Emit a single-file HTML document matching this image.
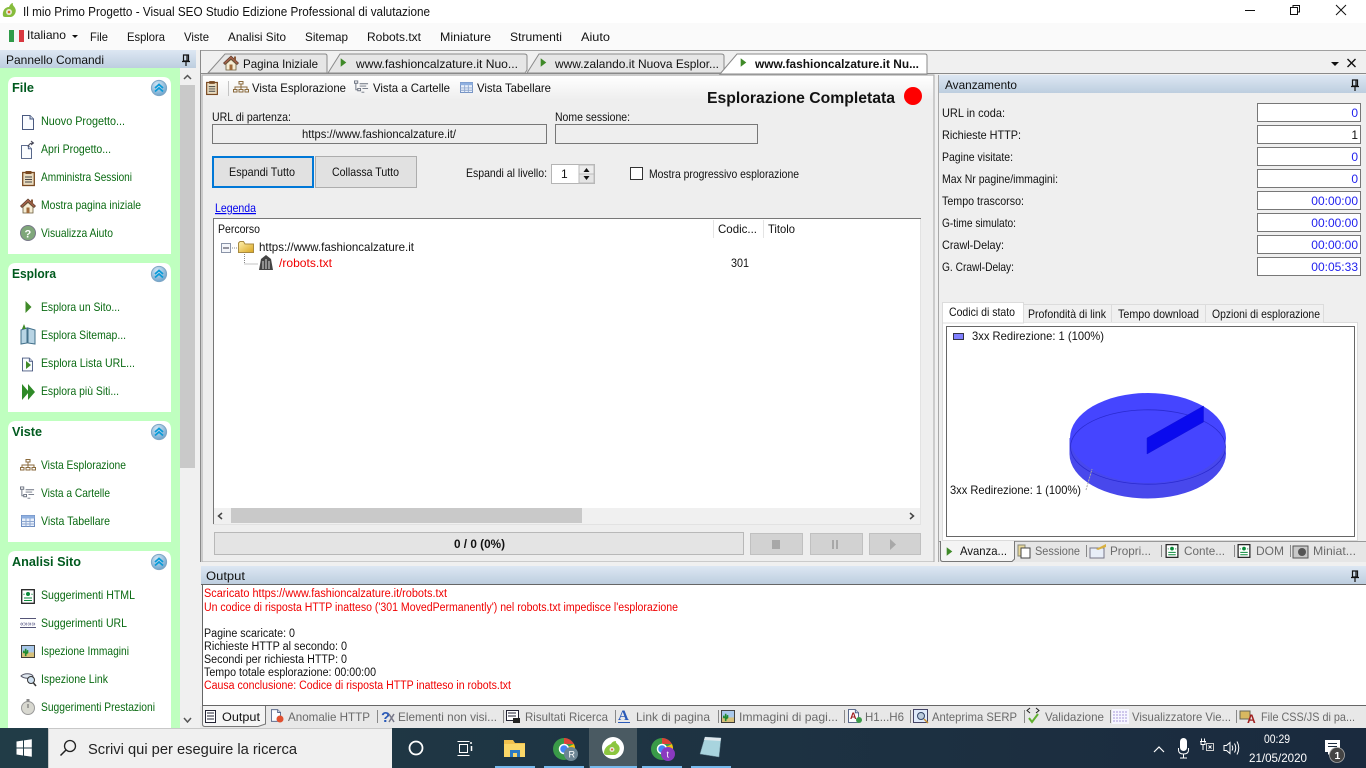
<!DOCTYPE html>
<html lang="it"><head><meta charset="utf-8"><title>Visual SEO Studio</title>
<style>
html,body{margin:0;padding:0;width:1366px;height:768px;overflow:hidden;background:#f0f0f0}
svg{display:block}
text{font-family:"Liberation Sans",sans-serif;font-size:12px;fill:#111;white-space:pre}
.g text{fill:#0a6a12}
.h text{fill:#005a1e;font-weight:bold;font-size:13px}
.m text{fill:#6a6a6a}
.v text{fill:#2222ee;text-anchor:end}
.o text{font-size:11.5px}
.r{fill:#f00000!important}
.i{stroke:#556;fill:none;stroke-width:1}
</style></head><body>
<svg width="1366" height="768" viewBox="0 0 1366 768" xmlns="http://www.w3.org/2000/svg">
<defs>
<linearGradient id="hd" x1="0" y1="0" x2="0" y2="1"><stop offset="0" stop-color="#dde7f3"/><stop offset="1" stop-color="#bdcedf"/></linearGradient>
<linearGradient id="tb" x1="0" y1="0" x2="0" y2="1"><stop offset="0" stop-color="#ffffff"/><stop offset="1" stop-color="#eeeeee"/></linearGradient>
<linearGradient id="tk" x1="0" y1="0" x2="1" y2="0"><stop offset="0" stop-color="#213c47"/><stop offset="1" stop-color="#1a2a3e"/></linearGradient>
<linearGradient id="fo" x1="0" y1="0" x2="1" y2="1"><stop offset="0" stop-color="#fff2b0"/><stop offset="1" stop-color="#d9a520"/></linearGradient>
<radialGradient id="bl" cx=".4" cy=".3" r=".8"><stop offset="0" stop-color="#d8e8f5"/><stop offset="1" stop-color="#5f9cc8"/></radialGradient>
<symbol id="chev" viewBox="0 0 16 16" overflow="visible"><circle cx="8" cy="8" r="7.6" fill="url(#bl)" stroke="#7fa7c6"/><path d="M4 8 8 4.500 12 8M4 11.500 8 8 12 11.500" fill="none" stroke="#0a9ad8" stroke-width="1.800"/></symbol>
<symbol id="pin" viewBox="0 0 10 12" overflow="visible"><path d="M2.500 1H7.500V7H2.500ZM6 1V7M1 7.500H9M5 8V12" fill="none" stroke="#111" stroke-width="1.200"/></symbol>
<symbol id="play" viewBox="0 0 10 12" overflow="visible"><path d="M1 0 9 6 1 12Z" fill="#3f8a28"/></symbol>
<symbol id="tree" viewBox="0 0 16 12" overflow="visible"><path d="M6 .500H10V3H6ZM.500 8.500H4V11H.500ZM6 8.500H10V11H6ZM12 8.500H15.500V11H12ZM8 3V6M2 8.500V6H14V8.500M8 6V8.500" fill="none" stroke="#8a6a3c"/></symbol>
<symbol id="fold" viewBox="0 0 16 14" overflow="visible"><path d="M.500 .500H4V3H.500ZM6 3.500H15M6 6H13M4 8.500H7V11H4ZM9 8.500H15M8 12.500H11M2 3V10H4" fill="none" stroke="#6b7280"/></symbol>
<symbol id="tab" viewBox="0 0 14 12" overflow="visible"><rect x=".5" y=".5" width="13" height="11" fill="#eaf1fb" stroke="#6c8cc0"/><rect x=".5" y=".5" width="13" height="3" fill="#8fb0e0"/><path d="M.500 6.500H13.500M.500 9H13.500M5 3.500V11.500M9 3.500V11.500" stroke="#8fa8d0" fill="none"/></symbol>
<symbol id="clip" viewBox="0 0 13 15" overflow="visible"><rect x=".7" y="1.500" width="11.600" height="13" fill="#e9dcc0" stroke="#7a4a22" stroke-width="1.300"/><rect x="3.500" y="0" width="6" height="3" fill="#7a4a22"/><path d="M3 6H10M3 8.500H10M3 11H10" stroke="#444"/></symbol>
<symbol id="doc" viewBox="0 0 12 15" overflow="visible"><path d="M.500 .500H8L11.500 4V14.500H.500Z" fill="#fafcff" stroke="#4a5a80"/><path d="M8 .500V4H11.500" fill="#cfd8e8" stroke="#4a5a80"/></symbol>
<symbol id="house" viewBox="0 0 16 16" overflow="visible"><path d="M8 1 .500 8 2 9.500 8 4 14 9.500 15.500 8Z" fill="#a6624a" stroke="#5a3a2a" stroke-width=".7"/><path d="M3 9V15H13V9L8 4.500Z" fill="#f5ecd4" stroke="#6a5a3a" stroke-width=".8"/><rect x="6.500" y="9.500" width="3" height="5.500" fill="#a06a3a"/><rect x="11" y="1.500" width="2" height="4" fill="#8a5a3a"/></symbol>
<symbol id="code" viewBox="0 0 14 15" overflow="visible"><rect x=".7" y=".7" width="12.600" height="13.600" fill="#fff" stroke="#222" stroke-width="1.300"/><circle cx="7" cy="5" r="2" fill="#0a8a3a"/><path d="M3.500 5 2.500 5.500M10.500 5 11.500 5.500M3 9H11M3 11.500H11" stroke="#0a8a3a" fill="none"/></symbol>
<symbol id="foldr" viewBox="0 0 16 12" overflow="visible"><path d="M.500 2V11.500H15.500V3H7L5.500 .500H2Z" fill="url(#fo)" stroke="#a88a40"/></symbol>
<symbol id="img" viewBox="0 0 15 14" overflow="visible"><rect x=".5" y=".5" width="14" height="13" fill="#d6c07a" stroke="#333"/><rect x="1" y="1" width="13" height="7" fill="#a9c8ea"/><path d="M5 12V4M3 6V8H7V5.500M5 9H7" stroke="#208a30" stroke-width="1.700" fill="none"/></symbol>
</defs>

<!-- title bar -->
<rect width="1366" height="23" fill="#fff"/>
<g><path d="M3 16C2 11 5 7 9 7 10 5 11 3 13 3 12 5 14 6 15 8 17 11 15 16 11 17H6C5 17 3.500 17 3 16Z" fill="#86bc3c"/><circle cx="9" cy="12" r="3" fill="#e8e8d8"/><circle cx="9" cy="12" r="1.300" fill="#d86a28"/></g>
<text x="23" y="16" textLength="407" lengthAdjust="spacingAndGlyphs" style="font-size:12.5px">Il mio Primo Progetto - Visual SEO Studio Edizione Professional di valutazione</text>
<path d="M1245 10.500H1255" stroke="#111"/>
<path d="M1290.500 7.500H1297.500V14.500H1290.500ZM1293 7V5.500H1299.500V12H1298" fill="none" stroke="#111"/>
<path d="M1336 5 1346 15M1346 5 1336 15" stroke="#111"/>

<!-- menu -->
<rect y="23" width="1366" height="27" fill="#fafafa"/>
<rect x="9" y="30" width="5" height="12" fill="#2f9a48"/><rect x="14" y="30" width="5" height="12" fill="#f4f4f4"/><rect x="19" y="30" width="5" height="12" fill="#d83840"/>
<text x="27" y="39" textLength="39" lengthAdjust="spacingAndGlyphs">Italiano</text>
<path d="M72 35H78L75 38Z" fill="#111"/>
<g>
<text x="90" y="41" textLength="18" lengthAdjust="spacingAndGlyphs">File</text>
<text x="127" y="41" textLength="38" lengthAdjust="spacingAndGlyphs">Esplora</text>
<text x="184" y="41" textLength="25" lengthAdjust="spacingAndGlyphs">Viste</text>
<text x="228" y="41" textLength="58" lengthAdjust="spacingAndGlyphs">Analisi Sito</text>
<text x="305" y="41" textLength="43" lengthAdjust="spacingAndGlyphs">Sitemap</text>
<text x="367" y="41" textLength="54" lengthAdjust="spacingAndGlyphs">Robots.txt</text>
<text x="440" y="41" textLength="51" lengthAdjust="spacingAndGlyphs">Miniature</text>
<text x="510" y="41" textLength="52" lengthAdjust="spacingAndGlyphs">Strumenti</text>
<text x="581" y="41" textLength="29" lengthAdjust="spacingAndGlyphs">Aiuto</text>
</g>

<!-- left panel -->
<rect y="50" width="196" height="18" fill="url(#hd)"/>
<text x="6" y="64" textLength="98" lengthAdjust="spacingAndGlyphs">Pannello Comandi</text>
<use href="#pin" x="181" y="54" width="10" height="12"/>
<rect y="68" width="180" height="660" fill="#bfffbf"/>
<rect x="180" y="68" width="16" height="660" fill="#f0f0f0"/>
<rect x="180" y="85" width="15" height="383" fill="#c9c9c9"/>
<path d="M184 79 187.500 75.500 191 79M184 718 187.500 722 191 718" fill="none" stroke="#555" stroke-width="1.500"/>
<path d="M8 254V85Q8 77 16 77H163Q171 77 171 85V254ZM8 412V271Q8 263 16 263H163Q171 263 171 271V412ZM8 542V429Q8 421 16 421H163Q171 421 171 429V542ZM8 728V559Q8 551 16 551H163Q171 551 171 559V728Z" fill="#fff"/>
<g class="h">
<text x="12" y="92" textLength="22" lengthAdjust="spacingAndGlyphs">File</text>
<text x="12" y="278" textLength="44" lengthAdjust="spacingAndGlyphs">Esplora</text>
<text x="12" y="436" textLength="30" lengthAdjust="spacingAndGlyphs">Viste</text>
<text x="12" y="566" textLength="69" lengthAdjust="spacingAndGlyphs">Analisi Sito</text>
</g>
<use href="#chev" x="151" y="80" width="16" height="16"/><use href="#chev" x="151" y="266" width="16" height="16"/><use href="#chev" x="151" y="424" width="16" height="16"/><use href="#chev" x="151" y="554" width="16" height="16"/>
<g class="g">
<text x="41" y="125" textLength="84" lengthAdjust="spacingAndGlyphs">Nuovo Progetto...</text>
<text x="41" y="153" textLength="70" lengthAdjust="spacingAndGlyphs">Apri Progetto...</text>
<text x="41" y="181" textLength="91" lengthAdjust="spacingAndGlyphs">Amministra Sessioni</text>
<text x="41" y="209" textLength="100" lengthAdjust="spacingAndGlyphs">Mostra pagina iniziale</text>
<text x="41" y="237" textLength="72" lengthAdjust="spacingAndGlyphs">Visualizza Aiuto</text>
<text x="41" y="311" textLength="79" lengthAdjust="spacingAndGlyphs">Esplora un Sito...</text>
<text x="41" y="339" textLength="85" lengthAdjust="spacingAndGlyphs">Esplora Sitemap...</text>
<text x="41" y="367" textLength="94" lengthAdjust="spacingAndGlyphs">Esplora Lista URL...</text>
<text x="41" y="395" textLength="78" lengthAdjust="spacingAndGlyphs">Esplora più Siti...</text>
<text x="41" y="469" textLength="85" lengthAdjust="spacingAndGlyphs">Vista Esplorazione</text>
<text x="41" y="497" textLength="69" lengthAdjust="spacingAndGlyphs">Vista a Cartelle</text>
<text x="41" y="525" textLength="69" lengthAdjust="spacingAndGlyphs">Vista Tabellare</text>
<text x="41" y="599" textLength="94" lengthAdjust="spacingAndGlyphs">Suggerimenti HTML</text>
<text x="41" y="627" textLength="86" lengthAdjust="spacingAndGlyphs">Suggerimenti URL</text>
<text x="41" y="655" textLength="88" lengthAdjust="spacingAndGlyphs">Ispezione Immagini</text>
<text x="41" y="683" textLength="67" lengthAdjust="spacingAndGlyphs">Ispezione Link</text>
<text x="41" y="711" textLength="114" lengthAdjust="spacingAndGlyphs">Suggerimenti Prestazioni</text>
</g>
<!-- sidebar icons -->
<use href="#doc" x="22" y="115" width="12" height="15"/>
<use href="#doc" x="21" y="145" width="11" height="14"/><path d="M28 147Q29 143 33 143M31 141 33.500 143 31 145" fill="none" stroke="#445" />
<use href="#clip" x="22" y="171" width="13" height="15"/>
<use href="#house" x="20" y="198" width="16" height="16"/>
<circle cx="28" cy="233" r="7.500" fill="#7fa77a" stroke="#778"/><text x="24.500" y="237.500" style="font-size:11px;font-weight:bold;fill:#fff">?</text>
<path d="M25.500 301 31.500 307 25.500 313Z" fill="#3f8a28"/>
<path d="M21 330 27 328V343L21 344Z M28 328 35 330V344L28 343Z" fill="#b8d4e4" stroke="#42708a"/><path d="M24 324 26 329H22Z" fill="#3f8a28"/>
<use href="#doc" x="22" y="357" width="11" height="15"/><path d="M26 361 31 365 26 369Z" fill="#3f8a28"/>
<path d="M22 384 29 392 22 400ZM28 384 35 392 28 400Z" fill="#2f8a28"/>
<use href="#tree" x="20" y="459" width="16" height="12"/>
<use href="#fold" x="20" y="486" width="15" height="14"/>
<use href="#tab" x="21" y="515" width="14" height="12"/>
<use href="#code" x="21" y="589" width="14" height="15"/>
<path d="M20 618.500H36M20 627.500H36" stroke="#557"/><text x="20" y="626" style="font-size:7px;fill:#447">«»»»</text>
<use href="#img" x="21" y="645" width="14" height="13"/>
<path d="M21 676C24 673 31 673 33 676 33 679 24 679 21 676Z" fill="#e0e8f0" stroke="#556"/><circle cx="31" cy="680" r="3.500" fill="#cfe0f0" stroke="#333"/><path d="M33.500 683 36 686" stroke="#333" stroke-width="1.500"/>
<circle cx="28" cy="708" r="6.500" fill="#d8d8d0" stroke="#999"/><rect x="26.500" y="699" width="3" height="2.500" fill="#888"/><path d="M28 708V704" stroke="#666"/>

<!-- center tab strip -->
<rect x="200" y="50" width="1166" height="25" fill="#f0f0f0"/>
<path d="M200 50.500H1366" stroke="#a0a0a0"/>
<path d="M200.500 50V562M200 73.500H1366" stroke="#8a8a8a"/>
<path d="M208 73 225 54H325Q327 54 327 56V73Z" fill="#e6e6e6" stroke="#8a8a8a"/>
<path d="M328 73 340 54H524Q527 54 527 56V70L525 73Z" fill="#e6e6e6" stroke="#8a8a8a"/>
<path d="M527 73 539 54H721Q724 54 724 56V70L723 73Z" fill="#e6e6e6" stroke="#8a8a8a"/>
<path d="M720 74 737 54H925Q927 54 927 56V74Z" fill="#fff" stroke="#8a8a8a"/>
<use href="#house" x="223" y="55" width="16" height="16"/>
<text x="243" y="68" textLength="75" lengthAdjust="spacingAndGlyphs">Pagina Iniziale</text>
<use href="#play" x="340" y="57" width="7" height="11"/>
<text x="356" y="68" textLength="162" lengthAdjust="spacingAndGlyphs">www.fashioncalzature.it Nuo...</text>
<use href="#play" x="540" y="57" width="7" height="11"/>
<text x="555" y="68" textLength="164" lengthAdjust="spacingAndGlyphs">www.zalando.it Nuova Esplor...</text>
<use href="#play" x="740" y="57" width="7" height="11"/>
<text x="755" y="68" textLength="164" lengthAdjust="spacingAndGlyphs" style="font-weight:bold">www.fashioncalzature.it Nu...</text>
<path d="M1331 62H1339L1335 66Z" fill="#111"/>
<path d="M1347.500 59 1355.500 67M1355.500 59 1347.500 67" stroke="#111" stroke-width="1.400"/>

<!-- main panel -->
<rect x="202" y="75" width="732" height="487" fill="#eeeeee" stroke="#a8a8a8"/>
<rect x="203" y="76" width="730" height="24" fill="url(#tb)"/>
<use href="#clip" x="206" y="81" width="12" height="14"/>
<path d="M228.500 81V96" stroke="#c4c4c4"/>
<use href="#tree" x="233" y="81" width="16" height="12"/>
<text x="252" y="92" textLength="94" lengthAdjust="spacingAndGlyphs">Vista Esplorazione</text>
<use href="#fold" x="354" y="80" width="15" height="14"/>
<text x="373" y="92" textLength="77" lengthAdjust="spacingAndGlyphs">Vista a Cartelle</text>
<use href="#tab" x="460" y="82" width="13" height="11"/>
<text x="477" y="92" textLength="74" lengthAdjust="spacingAndGlyphs">Vista Tabellare</text>
<text x="707" y="103" textLength="188" lengthAdjust="spacingAndGlyphs" style="font-size:16px;font-weight:bold">Esplorazione Completata</text>
<circle cx="913" cy="96" r="9" fill="#f00"/>
<text x="212" y="121" textLength="79" lengthAdjust="spacingAndGlyphs">URL di partenza:</text>
<rect x="212.500" y="124.500" width="334" height="19" fill="#eeeeee" stroke="#777"/>
<text x="302" y="138" textLength="154" lengthAdjust="spacingAndGlyphs">https://www.fashioncalzature.it/</text>
<text x="555" y="121" textLength="75" lengthAdjust="spacingAndGlyphs">Nome sessione:</text>
<rect x="555.500" y="124.500" width="202" height="19" fill="#eeeeee" stroke="#777"/>
<rect x="213" y="157" width="100" height="30" fill="#e1e1e1" stroke="#0078d7" stroke-width="2"/>
<text x="229" y="176" textLength="66" lengthAdjust="spacingAndGlyphs">Espandi Tutto</text>
<rect x="315.500" y="156.500" width="101" height="31" fill="#e1e1e1" stroke="#adadad"/>
<text x="332" y="176" textLength="67" lengthAdjust="spacingAndGlyphs">Collassa Tutto</text>
<text x="466" y="177" textLength="81" lengthAdjust="spacingAndGlyphs">Espandi al livello:</text>
<rect x="551.500" y="164.500" width="43" height="19" fill="#fff" stroke="#b4b4b4"/>
<text x="561" y="178">1</text>
<rect x="579" y="165" width="15" height="9" fill="#ececec" stroke="#bbb"/><rect x="579" y="174" width="15" height="9" fill="#e4e4e4" stroke="#bbb"/>
<path d="M583.500 172 586.500 168 589.500 172ZM583.500 176 586.500 180 589.500 176Z" fill="#111"/>
<rect x="630.500" y="167.500" width="12" height="12" fill="#fff" stroke="#333"/>
<text x="649" y="178" textLength="150" lengthAdjust="spacingAndGlyphs">Mostra progressivo esplorazione</text>
<text x="215" y="212" textLength="41" lengthAdjust="spacingAndGlyphs" style="fill:#0000ee;text-decoration:underline">Legenda</text>

<!-- tree -->
<rect x="213" y="218" width="708" height="306" fill="#fff"/>
<path d="M213 218.500H921M213.500 218V524" stroke="#777"/>
<path d="M920.500 219V524M213 524.500H921" stroke="#e2e2e2"/>
<path d="M713.500 220V238M763.500 220V238" stroke="#e4e4e4"/>
<text x="218" y="233" textLength="42" lengthAdjust="spacingAndGlyphs">Percorso</text>
<text x="718" y="233" textLength="39" lengthAdjust="spacingAndGlyphs">Codic...</text>
<text x="768" y="233" textLength="27" lengthAdjust="spacingAndGlyphs">Titolo</text>
<rect x="221.500" y="243.500" width="9" height="9" fill="#f4f6fa" stroke="#8a94a8"/><path d="M223 248H229" stroke="#334"/>
<path d="M232 248H237M244.500 254V264H258" stroke="#888" stroke-dasharray="1 1" fill="none"/>
<use href="#foldr" x="238" y="241" width="16" height="12"/>
<text x="259" y="251" textLength="155" lengthAdjust="spacingAndGlyphs">https://www.fashioncalzature.it</text>
<path d="M259 270H273L271 259 266 255 261 259Z" fill="#444"/><path d="M263 261V269M266 259V269M269 261V269" stroke="#ddd"/>
<text x="279" y="267" textLength="53" lengthAdjust="spacingAndGlyphs" class="r">/robots.txt</text>
<text x="731" y="267" textLength="18" lengthAdjust="spacingAndGlyphs">301</text>
<rect x="214" y="508" width="706" height="16" fill="#f0f0f0"/>
<rect x="231" y="508" width="351" height="15" fill="#c9c9c9"/>
<path d="M222 513 218.500 516 222 519M910 513 913.500 516 910 519" fill="none" stroke="#444" stroke-width="1.500"/>

<!-- progress -->
<rect x="214.500" y="532.500" width="529" height="22" fill="#e4e4e4" stroke="#b8b8b8"/>
<text x="454" y="548" textLength="51" lengthAdjust="spacingAndGlyphs" style="font-weight:bold">0 / 0 (0%)</text>
<rect x="750.500" y="533.500" width="52" height="21" fill="#d2d2d2" stroke="#c0c0c0"/>
<rect x="810.500" y="533.500" width="52" height="21" fill="#d2d2d2" stroke="#c0c0c0"/>
<rect x="869.500" y="533.500" width="51" height="21" fill="#d2d2d2" stroke="#c0c0c0"/>
<rect x="772" y="540" width="8" height="9" fill="#a8a8a8"/>
<path d="M832 540H834V549H832ZM836 540H838V549H836Z" fill="#a8a8a8"/>
<path d="M890 539 896 544.500 890 550Z" fill="#a8a8a8"/>

<!-- right panel -->
<rect x="939" y="75" width="427" height="487" fill="#efefef"/>
<path d="M938.500 75V562" stroke="#a8a8a8"/>
<rect x="939" y="75" width="427" height="18" fill="url(#hd)"/>
<text x="945" y="89" textLength="72" lengthAdjust="spacingAndGlyphs">Avanzamento</text>
<use href="#pin" x="1350" y="79" width="10" height="12"/>
<g>
<text x="942" y="117" textLength="63" lengthAdjust="spacingAndGlyphs">URL in coda:</text>
<text x="942" y="139" textLength="79" lengthAdjust="spacingAndGlyphs">Richieste HTTP:</text>
<text x="942" y="161" textLength="71" lengthAdjust="spacingAndGlyphs">Pagine visitate:</text>
<text x="942" y="183" textLength="116" lengthAdjust="spacingAndGlyphs">Max Nr pagine/immagini:</text>
<text x="942" y="205" textLength="82" lengthAdjust="spacingAndGlyphs">Tempo trascorso:</text>
<text x="942" y="227" textLength="74" lengthAdjust="spacingAndGlyphs">G-time simulato:</text>
<text x="942" y="249" textLength="62" lengthAdjust="spacingAndGlyphs">Crawl-Delay:</text>
<text x="942" y="271" textLength="72" lengthAdjust="spacingAndGlyphs">G. Crawl-Delay:</text>
</g>
<g fill="#fff" stroke="#777">
<rect x="1257.500" y="103.500" width="103" height="18"/><rect x="1257.500" y="125.500" width="103" height="18"/><rect x="1257.500" y="147.500" width="103" height="18"/><rect x="1257.500" y="169.500" width="103" height="18"/><rect x="1257.500" y="191.500" width="103" height="18"/><rect x="1257.500" y="213.500" width="103" height="18"/><rect x="1257.500" y="235.500" width="103" height="18"/><rect x="1257.500" y="257.500" width="103" height="18"/>
</g>
<g class="v">
<text x="1358" y="117">0</text><text x="1358" y="139" style="fill:#111">1</text><text x="1358" y="161">0</text><text x="1358" y="183">0</text>
<text x="1358" y="205">00:00:00</text><text x="1358" y="227">00:00:00</text><text x="1358" y="249">00:00:00</text><text x="1358" y="271">00:05:33</text>
</g>
<!-- chart tabs -->
<rect x="942.500" y="322.500" width="415" height="218" fill="#fff" stroke="#dcdcdc"/>
<path d="M1023.500 322.500V304.500H1323.500V322.500M1111.500 304.500V322M1205.500 304.500V322" fill="#f0f0f0" stroke="#dcdcdc"/>
<path d="M942.500 323V302.500H1023.500V323Z" fill="#fff" stroke="#dcdcdc"/>
<text x="949" y="316" textLength="66" lengthAdjust="spacingAndGlyphs">Codici di stato</text>
<text x="1028" y="318" textLength="78" lengthAdjust="spacingAndGlyphs">Profondità di link</text>
<text x="1118" y="318" textLength="81" lengthAdjust="spacingAndGlyphs">Tempo download</text>
<text x="1212" y="318" textLength="108" lengthAdjust="spacingAndGlyphs">Opzioni di esplorazione</text>
<rect x="946.500" y="326.500" width="408" height="210" fill="#fff" stroke="#666"/>
<rect x="953.500" y="333.500" width="10" height="6" fill="#8080ff" stroke="#334"/>
<text x="972" y="340" textLength="132" lengthAdjust="spacingAndGlyphs">3xx Redirezione: 1 (100%)</text>
<!-- pie -->
<path d="M1069.500 438V454A78 44.500 0 0 0 1225.500 454V438Z" fill="#4848e8"/>
<ellipse cx="1148" cy="453.500" rx="78" ry="44.500" fill="#4848ec"/>
<ellipse cx="1148" cy="438" rx="78" ry="45" fill="#4545ff"/>
<path d="M1070.500 447A77 37 0 0 1 1225.500 447A77 37 0 0 1 1070.500 447Z" fill="none" stroke="#2a2ad0" stroke-width=".8"/>
<path d="M1147 438 1203.500 406V422L1147 454Z" fill="#0a0aee" stroke="#1010d8" stroke-width=".5"/>
<path d="M1086 490 1092 469" stroke="#aaa" stroke-dasharray="2 1"/>
<text x="950" y="494" textLength="131" lengthAdjust="spacingAndGlyphs">3xx Redirezione: 1 (100%)</text>
<!-- right bottom tabs -->
<rect x="939" y="541" width="427" height="21" fill="#e6e6e6"/>
<path d="M939 541.500H1366" stroke="#999"/>
<path d="M940.500 541V559Q940.500 561.500 943 561.500H1012L1014.500 559V541" fill="#f4f4f4" stroke="#777"/>
<use href="#play" x="946" y="546" width="7" height="11"/>
<text x="960" y="555" textLength="47" lengthAdjust="spacingAndGlyphs">Avanza...</text>
<g class="m">
<text x="1035" y="555" textLength="45" lengthAdjust="spacingAndGlyphs">Sessione</text>
<text x="1110" y="555" textLength="41" lengthAdjust="spacingAndGlyphs">Propri...</text>
<text x="1184" y="555" textLength="41" lengthAdjust="spacingAndGlyphs">Conte...</text>
<text x="1256" y="555" textLength="28" lengthAdjust="spacingAndGlyphs">DOM</text>
<text x="1313" y="555" textLength="43" lengthAdjust="spacingAndGlyphs">Miniat...</text>
</g>
<path d="M1086.500 545V557M1161.500 545V557M1234.500 545V557M1290.500 545V557" stroke="#888"/>
<rect x="1018" y="545" width="7" height="11" fill="#e8d89a" stroke="#887"/><rect x="1021" y="548" width="9" height="10" fill="#fff" stroke="#444"/>
<rect x="1090" y="548" width="14" height="10" fill="#e8eef8" stroke="#778"/><path d="M1096 549 1106 544V547L1098 550Z" fill="#d8b040"/>
<use href="#code" x="1165" y="544" width="14" height="14"/>
<use href="#code" x="1237" y="544" width="14" height="14"/>
<rect x="1293" y="546" width="15" height="12" fill="#c8c8c8" stroke="#555"/><circle cx="1302" cy="552" r="4" fill="#555"/>

<!-- output -->
<rect x="200" y="562" width="1166" height="4" fill="#f0f0f0"/>
<rect x="201" y="566" width="1165" height="18" fill="url(#hd)"/>
<text x="206" y="580" textLength="39" lengthAdjust="spacingAndGlyphs">Output</text>
<use href="#pin" x="1350" y="570" width="10" height="12"/>
<rect x="202" y="585" width="1164" height="120" fill="#fff"/>
<path d="M201 584.500H1366M202.500 585V705M202 705.500H1366" stroke="#666"/>
<g class="o">
<text x="204" y="597" textLength="243" lengthAdjust="spacingAndGlyphs" class="r">Scaricato https://www.fashioncalzature.it/robots.txt</text>
<text x="204" y="611" textLength="474" lengthAdjust="spacingAndGlyphs" class="r">Un codice di risposta HTTP inatteso ('301 MovedPermanently') nel robots.txt impedisce l'esplorazione</text>
<text x="204" y="637" textLength="91" lengthAdjust="spacingAndGlyphs">Pagine scaricate: 0</text>
<text x="204" y="650" textLength="143" lengthAdjust="spacingAndGlyphs">Richieste HTTP al secondo: 0</text>
<text x="204" y="663" textLength="143" lengthAdjust="spacingAndGlyphs">Secondi per richiesta HTTP: 0</text>
<text x="204" y="676" textLength="172" lengthAdjust="spacingAndGlyphs">Tempo totale esplorazione: 00:00:00</text>
<text x="204" y="689" textLength="307" lengthAdjust="spacingAndGlyphs" class="r">Causa conclusione: Codice di risposta HTTP inatteso in robots.txt</text>
</g>
<!-- bottom tabs -->
<rect x="200" y="706" width="1166" height="22" fill="#e8e8e8"/>
<path d="M202.500 706V724Q202.500 726.500 205 726.500H258L265.500 724V706" fill="#f4f4f4" stroke="#777"/>
<rect x="205.500" y="710.500" width="10" height="12" fill="#fff" stroke="#223"/><path d="M207 713H214M207 716H214M207 719H214" stroke="#223"/>
<text x="222" y="721" textLength="38" lengthAdjust="spacingAndGlyphs">Output</text>
<g class="m">
<text x="288" y="721" textLength="82" lengthAdjust="spacingAndGlyphs">Anomalie HTTP</text>
<text x="398" y="721" textLength="99" lengthAdjust="spacingAndGlyphs">Elementi non visi...</text>
<text x="525" y="721" textLength="83" lengthAdjust="spacingAndGlyphs">Risultati Ricerca</text>
<text x="636" y="721" textLength="74" lengthAdjust="spacingAndGlyphs">Link di pagina</text>
<text x="739" y="721" textLength="99" lengthAdjust="spacingAndGlyphs">Immagini di pagi...</text>
<text x="865" y="721" textLength="39" lengthAdjust="spacingAndGlyphs">H1...H6</text>
<text x="932" y="721" textLength="85" lengthAdjust="spacingAndGlyphs">Anteprima SERP</text>
<text x="1045" y="721" textLength="59" lengthAdjust="spacingAndGlyphs">Validazione</text>
<text x="1132" y="721" textLength="99" lengthAdjust="spacingAndGlyphs">Visualizzatore Vie...</text>
<text x="1261" y="721" textLength="94" lengthAdjust="spacingAndGlyphs">File CSS/JS di pa...</text>
</g>
<path d="M377.500 710V723M503.500 710V723M615.500 710V723M718.500 710V723M844.500 710V723M910.500 710V723M1024.500 710V723M1110.500 710V723M1236.500 710V723" stroke="#888"/>
<use href="#doc" x="271" y="709" width="10" height="13"/><circle cx="280" cy="719" r="3.500" fill="#e05030"/>
<text x="381" y="722" style="font-size:15px;font-weight:bold;fill:#2a5ab8">?</text><path d="M389 714 394 722M394 714 389 722" stroke="#778" stroke-width="1.500"/>
<rect x="506.500" y="710.500" width="12" height="10" fill="#fff" stroke="#223"/><path d="M508 713H516M508 716H516" stroke="#223"/><rect x="513" y="718" width="7" height="5" fill="#222"/>
<text x="618" y="720" style="font-size:15px;font-weight:bold;fill:#2a5ab8;font-family:'Liberation Serif',serif">A</text><path d="M618 722.500H630" stroke="#2a5ab8"/>
<use href="#img" x="721" y="710" width="14" height="13"/>
<use href="#doc" x="848" y="709" width="11" height="14"/><text x="850" y="719" style="font-size:9px;font-weight:bold;fill:#a02020">A</text><circle cx="859" cy="720" r="3" fill="#3a9a48"/>
<rect x="913.500" y="709.500" width="14" height="13" fill="#dfeafa" stroke="#446"/><circle cx="921" cy="716" r="3.500" fill="#bcd" stroke="#346"/><path d="M924 719 928 723" stroke="#c89030" stroke-width="1.500"/>
<path d="M1030 713 1027 710.500 1030 708M1036 713 1039 710.500 1036 708" fill="none" stroke="#222"/><path d="M1029 718 1032 722 1038 714" fill="none" stroke="#60b030" stroke-width="2"/>
<rect x="1112" y="709" width="17" height="15" fill="#f6f6ff"/><path d="M1113 712H1128M1113 715H1128M1113 718H1128M1113 721H1128" stroke="#a898d8" stroke-dasharray="2 1"/>
<path d="M1240 711H1250V719H1240Z" fill="#d8b860" stroke="#665"/><text x="1247" y="723" style="font-size:12px;font-weight:bold;fill:#a02020">A</text>

<!-- taskbar -->
<rect y="728" width="1366" height="40" fill="url(#tk)"/>
<path d="M16.500 741.500 23 740.500V747.500H16.500ZM24 740.400 31.800 739.200V747.500H24ZM16.500 748.500H23V755.500L16.500 754.500ZM24 748.500H31.800V756.800L24 755.600Z" fill="#fff"/>
<rect x="48" y="728" width="344" height="40" fill="#f0f0f0"/>
<path d="M48 728.500H392M48.500 728V768" stroke="#c8c8c8"/>
<circle cx="70" cy="746" r="5.500" fill="none" stroke="#222" stroke-width="1.300"/><path d="M66 750 60.500 755.500" stroke="#222" stroke-width="1.500"/>
<text x="88" y="754" textLength="209" lengthAdjust="spacingAndGlyphs" style="font-size:14.500px;fill:#222">Scrivi qui per eseguire la ricerca</text>
<circle cx="416" cy="748" r="6.500" fill="none" stroke="#fff" stroke-width="1.800"/>
<path d="M457.500 741.500H469.500M459.500 744.500H467.500V752.500H459.500ZM457.500 755.500H469.500" fill="none" stroke="#fff"/><path d="M470 743H472M471.500 746V751" stroke="#fff" stroke-width="1.500"/>
<path d="M504 743V740H513L515 743H525V757H504Z" fill="#f2c14e"/><rect x="504" y="744" width="21" height="13" fill="#fbd768"/><rect x="510" y="750" width="10" height="7" fill="#2d7bc4"/><rect x="513" y="753" width="4" height="4" fill="#fbd768"/>
<circle cx="564" cy="749" r="11" fill="#3a9a48"/><path d="M564 738A11 11 0 0 1 574 744H564Z" fill="#dc4437"/><path d="M574 744A11 11 0 0 1 568 759L564 749Z" fill="#f4c20d"/><circle cx="564" cy="749" r="4.500" fill="#4285f4" stroke="#fff" stroke-width="1.500"/>
<circle cx="571" cy="754" r="7" fill="#6c8594"/><text x="568.500" y="757.500" style="font-size:9px;fill:#fff">R</text>
<rect x="589" y="728" width="48" height="40" fill="#4a5a62"/>
<circle cx="613" cy="748" r="11" fill="#fff"/><path d="M604 753C604 748 608 745 611 744 612 742 614 741 616 741 615 743 618 744 619 746 621 750 618 754 615 755H608C606 755 604.500 755 604 753Z" fill="#8cc63f"/><circle cx="612" cy="749.500" r="2.500" fill="#e8e8d8"/><circle cx="612" cy="749.500" r="1" fill="#d86a28"/>
<circle cx="662" cy="749" r="11" fill="#3a9a48"/><path d="M662 738A11 11 0 0 1 672 744H662Z" fill="#dc4437"/><path d="M672 744A11 11 0 0 1 666 759L662 749Z" fill="#f4c20d"/><circle cx="662" cy="749" r="4.500" fill="#4285f4" stroke="#fff" stroke-width="1.500"/>
<circle cx="668" cy="754" r="7" fill="#8a3ac0"/><text x="666.500" y="757.500" style="font-size:9px;fill:#fff">t</text>
<path d="M705 737 721 738 719 757 700 754Z" fill="#a8d4de" stroke="#6a8a98" stroke-width=".5"/><path d="M705 737 721 738 720.500 741 704 740Z" fill="#dfe8ec"/>
<g fill="#76b9ed"><rect x="495" y="766" width="40" height="2"/><rect x="544" y="766" width="40" height="2"/><rect x="590" y="766" width="47" height="2"/><rect x="642" y="766" width="40" height="2"/><rect x="691" y="766" width="40" height="2"/></g>
<path d="M1154 752 1159 747 1164 752" fill="none" stroke="#fff" stroke-width="1.200"/>
<rect x="1180" y="738" width="7" height="13" rx="3.500" fill="#fff"/><path d="M1178.500 748V750Q1178.500 754 1183.500 754 1188.500 754 1188.500 750V748M1183.500 754V758M1180 758H1187" fill="none" stroke="#fff"/>
<path d="M1200 741.500H1206M1201.500 741.500V738.500M1204.500 741.500V738.500M1203 745V750M1201 741.500V744.500H1205V741.500" fill="none" stroke="#fff"/><rect x="1206.500" y="743.500" width="7" height="7" fill="none" stroke="#ccc"/><path d="M1208.500 745.500 1211.500 748.500M1211.500 745.500 1208.500 748.500" stroke="#fff"/>
<path d="M1224 745.500H1226.500L1230 742.500V753.500L1226.500 750.500H1224ZM1232 745.500Q1233.500 748 1232 750.500M1234.500 743.500Q1237 748 1234.500 752.500M1237 741.500Q1240.500 748 1237 754.500" fill="none" stroke="#fff"/>
<text x="1264" y="743" textLength="26" lengthAdjust="spacingAndGlyphs" style="fill:#fff">00:29</text>
<text x="1249" y="762" textLength="58" lengthAdjust="spacingAndGlyphs" style="fill:#fff">21/05/2020</text>
<path d="M1325 740H1340V752H1331L1328 755V752H1325Z" fill="#fff"/><path d="M1328 743.500H1337M1328 746.500H1337" stroke="#1c2c3e"/>
<circle cx="1337" cy="755" r="7.500" fill="#444" stroke="#aaa" stroke-width=".8"/><text x="1334.500" y="759" style="font-size:10.500px;font-weight:bold;fill:#fff">1</text>
</svg>
</body></html>
